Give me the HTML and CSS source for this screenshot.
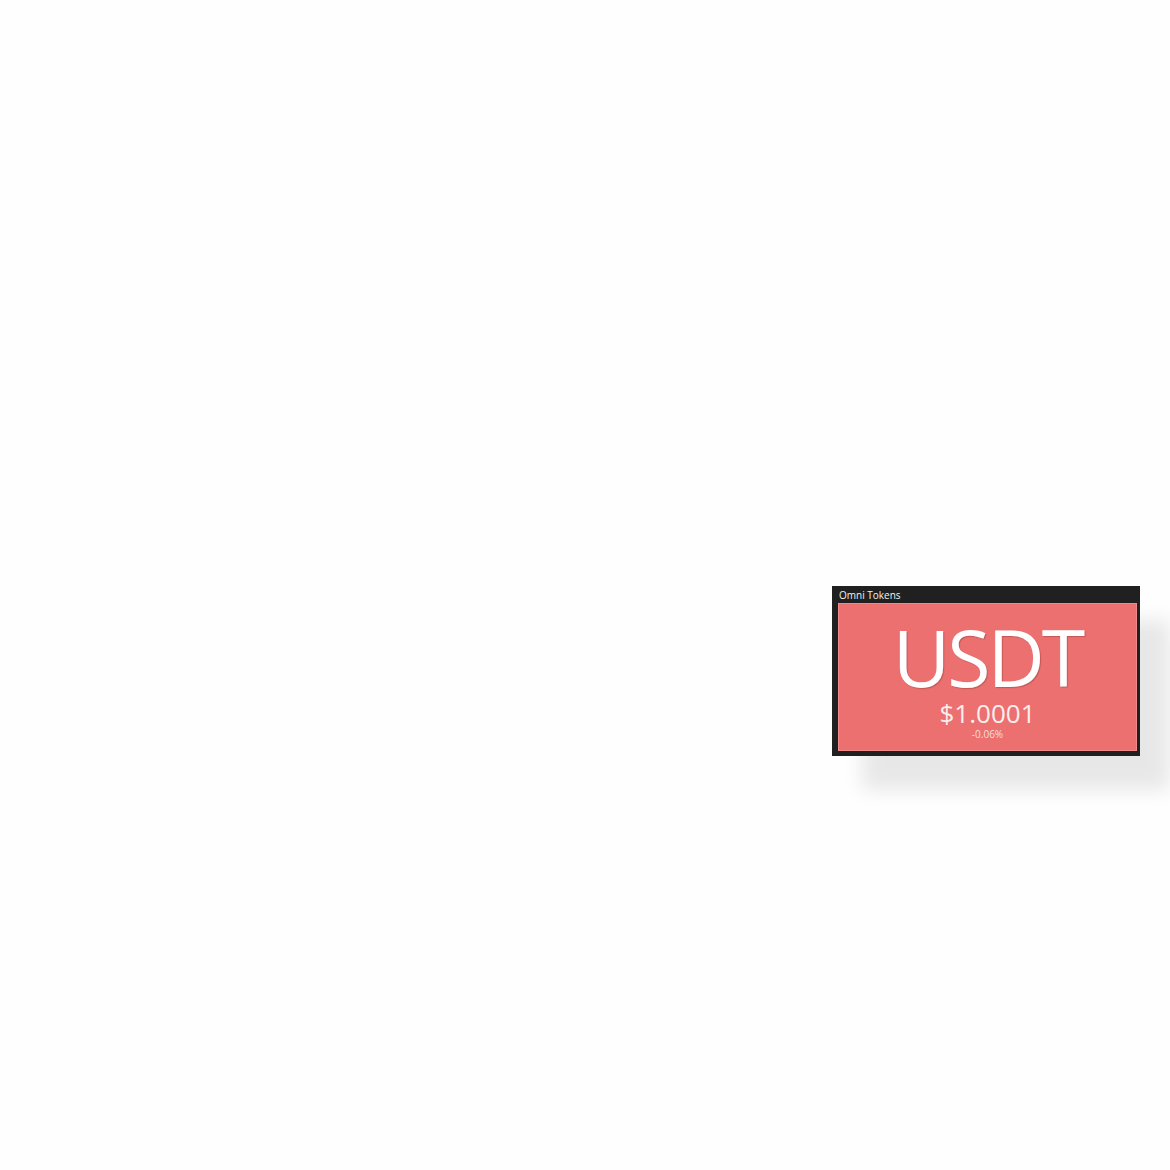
FILE: index.html
```html
<!DOCTYPE html>
<html lang="en">
<head>
    <meta charset="UTF-8">
    <title>Omni Tokens</title>
    <link rel="stylesheet" href="styles.css">
</head>
<body>
    <div class="canvas">
        <div class="widget">
            <div class="widget-title">Omni Tokens</div>
            <div class="tile">
                <div class="symbol">USDT</div>
                <div class="price">$1.0001</div>
                <div class="change">-0.06%</div>
            </div>
        </div>
    </div>
</body>
</html>
```
FILE: styles.css
```css
body {
    margin: 0;
    background-color: #fefefe;
    font-family: "Open Sans", sans-serif;
}
.canvas {
    min-height: 1170px;
    box-sizing: border-box;
    padding: 586px 0 0 832px;
}
.widget {
    width: 308px;
    height: 170px;
    box-sizing: border-box;
    background-color: #1f201f;
    padding: 0 3px 5px 6px;
    display: flex;
    flex-direction: column;
    box-shadow: 30px 34px 18px rgba(0, 0, 0, 0.09);
}
.widget-title {
    height: 17px;
    line-height: 18px;
    font-size: 10px;
    color: #f2f2f2;
    padding-left: 1px;
}
.tile {
    flex: 1;
    background-color: #ec7070;
    border: 1px solid #f08a8a;
    display: flex;
    flex-direction: column;
    align-items: center;
    color: #ffffff;
}
.symbol {
    font-size: 79px;
    line-height: 1;
    margin-top: 13px;
    letter-spacing: -3px;
    text-shadow: 1px 1px 1px rgba(120, 40, 40, 0.35);
}
.price {
    font-size: 26px;
    line-height: 1;
    margin-top: 4px;
    color: #fbeeee;
}
.change {
    font-size: 10px;
    line-height: 1;
    margin-top: 3px;
    color: #f6dede;
}
```
